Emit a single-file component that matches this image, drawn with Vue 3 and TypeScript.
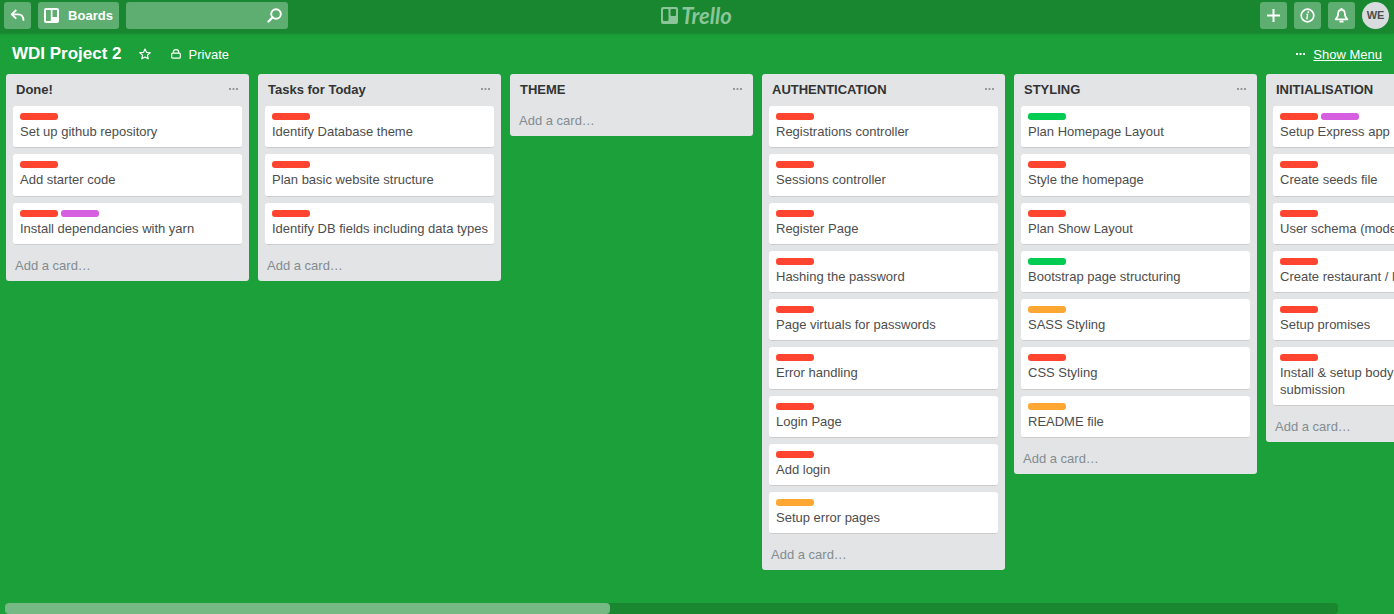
<script setup lang="ts">
import { ref } from 'vue'

type Label = 'red' | 'purple' | 'green' | 'orange'

interface Card {
  title: string
  labels: Label[]
}

interface List {
  name: string
  cards: Card[]
}

const card = (title: string, ...labels: Label[]): Card => ({ title, labels })

const search = ref('')

const lists: List[] = [
  {
    name: 'Done!',
    cards: [
      card('Set up github repository', 'red'),
      card('Add starter code', 'red'),
      card('Install dependancies with yarn', 'red', 'purple'),
    ],
  },
  {
    name: 'Tasks for Today',
    cards: [
      card('Identify Database theme', 'red'),
      card('Plan basic website structure', 'red'),
      card('Identify DB fields including data types', 'red'),
    ],
  },
  { name: 'THEME', cards: [] },
  {
    name: 'AUTHENTICATION',
    cards: [
      card('Registrations controller', 'red'),
      card('Sessions controller', 'red'),
      card('Register Page', 'red'),
      card('Hashing the password', 'red'),
      card('Page virtuals for passwords', 'red'),
      card('Error handling', 'red'),
      card('Login Page', 'red'),
      card('Add login', 'red'),
      card('Setup error pages', 'orange'),
    ],
  },
  {
    name: 'STYLING',
    cards: [
      card('Plan Homepage Layout', 'green'),
      card('Style the homepage', 'red'),
      card('Plan Show Layout', 'red'),
      card('Bootstrap page structuring', 'green'),
      card('SASS Styling', 'orange'),
      card('CSS Styling', 'red'),
      card('README file', 'orange'),
    ],
  },
  {
    name: 'INITIALISATION',
    cards: [
      card('Setup Express app', 'red', 'purple'),
      card('Create seeds file', 'red'),
      card('User schema (model)', 'red'),
      card('Create restaurant / location', 'red'),
      card('Setup promises', 'red'),
      card('Install & setup body-parser for submission', 'red'),
    ],
  },
]
</script>

<template>
  <div class="app">
    <header class="topbar">
      <div class="group">
        <button class="tile" type="button" aria-label="Back">
          <svg width="15" height="13" viewBox="0 0 15 13" fill="none" stroke="#fff" stroke-width="1.800">
            <path d="M6.300 1 1.700 5.300l4.600 4.300M2 5.300h6.200c3.700 0 5.300 2.200 5.300 6.500" stroke-linejoin="round" />
          </svg>
        </button>
        <button class="tile boards" type="button">
          <svg width="15" height="15" viewBox="0 0 15 15">
            <path
              fill="#fff"
              fill-rule="evenodd"
              d="M2 0h11a2 2 0 0 1 2 2v11a2 2 0 0 1-2 2H2a2 2 0 0 1-2-2V2a2 2 0 0 1 2-2zM2 2v11H6.800V2zM8.500 2v7H13V2z"
            />
          </svg>
          <span>Boards</span>
        </button>
        <div class="search">
          <input v-model="search" type="text" aria-label="Search" />
          <button type="button" aria-label="Run search">
            <svg width="15" height="15" viewBox="0 0 15 15" fill="none" stroke="#fff" stroke-width="1.900">
              <circle cx="9" cy="6" r="4.800" />
              <path d="M5.700 9.300 1.500 13.500" stroke-width="2.300" stroke-linecap="round" />
            </svg>
          </button>
        </div>
      </div>

      <a class="logo" href="#" aria-label="Trello home">
        <svg width="17" height="17" viewBox="0 0 17 17">
          <path
            fill="currentColor"
            fill-rule="evenodd"
            d="M2 0h13a2 2 0 0 1 2 2v13a2 2 0 0 1-2 2H2a2 2 0 0 1-2-2V2a2 2 0 0 1 2-2zM3 2a1 1 0 0 0-1 1v10a1 1 0 0 0 1 1h3.500a1 1 0 0 0 1-1V3a1 1 0 0 0-1-1zM10.500 2a1 1 0 0 0-1 1v5a1 1 0 0 0 1 1H14a1 1 0 0 0 1-1V3a1 1 0 0 0-1-1z"
          />
        </svg>
        <span>Trello</span>
      </a>

      <div class="group right">
        <button class="tile" type="button" aria-label="Create">
          <svg width="13" height="13" viewBox="0 0 13 13" stroke="#fff" stroke-width="2">
            <path d="M6.500 0v13M0 6.500h13" />
          </svg>
        </button>
        <button class="tile" type="button" aria-label="Information">
          <svg width="15" height="15" viewBox="0 0 15 15" fill="none" stroke="#fff">
            <circle cx="7.500" cy="7.500" r="6.300" stroke-width="1.700" />
            <path d="M6.300 6.400h1.400l-.9 4.200h1" stroke-width="1.300" />
            <circle cx="8.300" cy="4.200" r=".9" fill="#fff" stroke="none" />
          </svg>
        </button>
        <button class="tile" type="button" aria-label="Notifications">
          <svg width="15" height="15" viewBox="0 0 15 15" fill="none" stroke="#fff">
            <path
              d="M7.500 1.800C5.300 1.800 4.200 3.400 4.200 5.300c0 3-.7 4.400-2.600 6h11.800c-1.900-1.600-2.600-3-2.600-6 0-1.900-1.100-3.500-3.300-3.500z"
              stroke-width="1.700"
              stroke-linejoin="round"
            />
            <path d="M7.500 0v2M5.500 13.500h4" stroke-width="2" />
          </svg>
        </button>
        <button class="avatar" type="button" aria-label="WE account">WE</button>
      </div>
    </header>

    <div class="boardbar">
      <h1>WDI Project 2</h1>
      <button class="plain star" type="button" aria-label="Star board">
        <svg width="12" height="12" viewBox="0 0 12 12" fill="none" stroke="#fff" stroke-width="1.200">
          <path d="M6 1 7.500 4.300 11.200 4.700 8.450 7.150 9.200 10.800 6 9 2.800 10.800 3.550 7.150 .8 4.700 4.500 4.300z" stroke-linejoin="round" />
        </svg>
      </button>
      <button class="plain" type="button">
        <svg width="10" height="10" viewBox="0 0 10 10" fill="none" stroke="#fff" stroke-width="1.200">
          <rect x=".7" y="4.200" width="8.600" height="5" rx="1" />
          <path d="M2.300 4V3.200a2.700 2.500 0 0 1 5.400 0V4" />
        </svg>
        <span>Private</span>
      </button>
      <a class="menu" href="#">
        <svg width="9" height="5" viewBox="0 0 9 5" fill="#fff">
          <path d="M0 0h2v2H0zM3.500 0h2v2h-2zM7 0h2v2H7z" />
        </svg>
        <span>Show Menu</span>
      </a>
    </div>

    <main class="canvas">
      <section v-for="list in lists" :key="list.name" class="list">
        <header>
          <h2>{{ list.name }}</h2>
          <button type="button" :aria-label="`${list.name} actions`">
            <svg width="10" height="4" viewBox="0 0 10 4" fill="#999">
              <path d="M0 0h2v2H0zM3.500 0h2v2h-2zM7 0h2v2H7z" />
            </svg>
          </button>
        </header>
        <article v-for="item in list.cards" :key="item.title" class="card">
          <div class="labels">
            <span v-for="label in item.labels" :key="label" :class="label"></span>
          </div>
          <p>{{ item.title }}</p>
        </article>
        <button class="add" type="button">Add a card…</button>
      </section>
    </main>

    <div class="track"><div class="thumb"></div></div>
  </div>
</template>

<style>
body {
  margin: 0;
  background: #1ba03a;
}
</style>

<style scoped>
.app {
  display: flex;
  flex-direction: column;
  height: 100vh;
  overflow: hidden;
  background: #1ba03a;
  color: #fff;
  font: 13px/1.25 "Liberation Sans", Arial, sans-serif;
}

button,
input {
  margin: 0;
  padding: 0;
  border: 0;
  background: none;
  color: inherit;
  font: inherit;
}

svg {
  display: block;
  flex: none;
}

h1,
h2,
p {
  margin: 0;
}

.topbar {
  display: grid;
  grid-template-columns: 1fr auto 1fr;
  flex: none;
  align-items: start;
  height: 31px;
  padding: 2px 5px 0 4px;
  background: #188730;
  box-shadow: 0 1px 2px #188730;
}

.group {
  display: flex;
  gap: 7px;
}

.right {
  justify-content: flex-end;
}

.tile {
  display: flex;
  align-items: center;
  justify-content: center;
  width: 27px;
  height: 27px;
  border-radius: 3px;
  background: #5dae70;
}

.boards {
  gap: 9px;
  width: 81px;
  font-weight: bold;
}

.boards span {
  padding-top: 1px;
}

.search {
  display: flex;
  align-items: center;
  width: 162px;
  height: 27px;
  border-radius: 3px;
  background: #5dae70;
}

.search input {
  flex: 1;
  min-width: 0;
  padding-left: 8px;
  outline: 0;
}

.search button {
  padding-right: 6px;
}

.logo {
  display: flex;
  align-items: center;
  gap: 3px;
  height: 27px;
  color: #8cc599;
  font: italic bold 22px/24px Lato, sans-serif;
  text-decoration: none;
}

.avatar {
  width: 27px;
  height: 27px;
  border-radius: 50%;
  background: #d9dcdf;
  color: #4d4d4d;
  font-size: 11px;
  font-weight: bold;
}

.boardbar {
  display: flex;
  flex: none;
  align-items: center;
  box-sizing: border-box;
  height: 43px;
  padding: 1px 12px 0;
  margin-bottom: -2px;
}

h1 {
  padding-bottom: 2px;
  font-size: 17px;
  line-height: 20px;
}

.plain {
  display: flex;
  align-items: center;
  gap: 8px;
}

.plain svg {
  margin-bottom: 3px;
}

.star {
  margin: 0 20px 0 17px;
}

.menu {
  display: flex;
  align-items: center;
  gap: 8px;
  margin-left: auto;
  color: #fff;
  text-decoration: none;
}

.menu span {
  text-decoration: underline;
}

.canvas {
  display: flex;
  flex: 1;
  align-items: flex-start;
  gap: 9px;
  min-height: 0;
  padding: 0 6px;
  overflow: hidden;
}

.list {
  box-sizing: border-box;
  flex: none;
  width: 243px;
  padding: 0 7px;
  border-radius: 3px;
  background: #e2e4e6;
}

.list header {
  display: flex;
  align-items: center;
  justify-content: space-between;
  height: 32px;
  padding: 0 3px;
}

h2 {
  color: #333;
  font-size: 13px;
}

.card {
  margin-bottom: 6px;
  padding: 7px 3px 7px 7px;
  border-bottom: 1px solid #ccc;
  border-radius: 3px;
  background: #fff;
  color: #4d4d4d;
}

.labels {
  display: flex;
  gap: 3px;
  margin-bottom: 4px;
}

.labels span {
  width: 38px;
  height: 7px;
  border-radius: 3px;
}

.red {
  background: #ff4530;
}

.purple {
  background: #d55fe0;
}

.green {
  background: #00cc52;
}

.orange {
  background: #ffa733;
}

.add {
  display: block;
  width: 100%;
  height: 30px;
  padding: 0 2px;
  color: #838c91;
  text-align: left;
}

.track {
  flex: none;
  height: 11px;
  margin: 0 56px 0 5px;
  border-radius: 4px;
  background: #188730;
}

.thumb {
  width: 45%;
  min-width: 605px;
  height: 100%;
  border-radius: 4px;
  background: #76b985;
}
</style>
